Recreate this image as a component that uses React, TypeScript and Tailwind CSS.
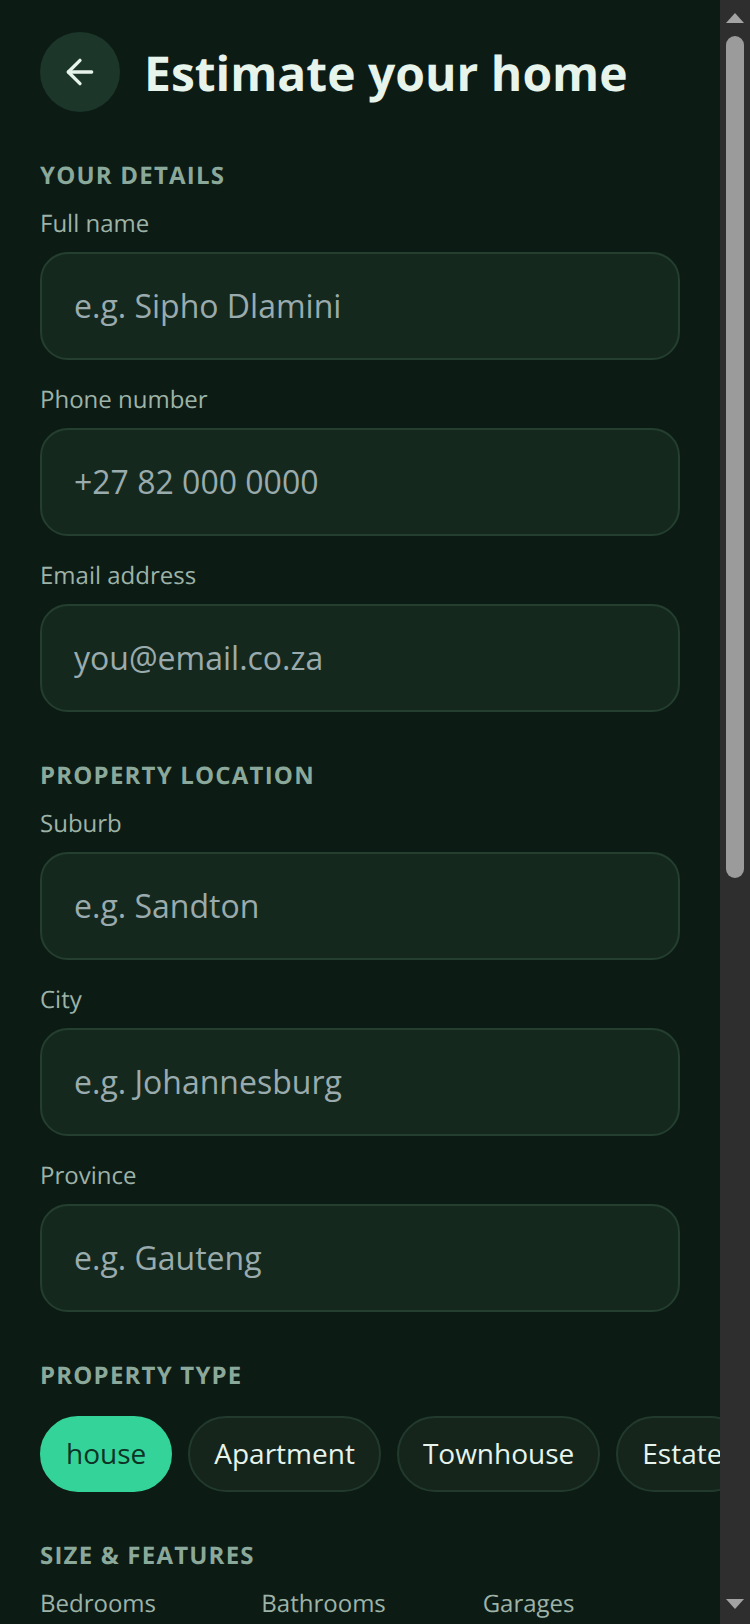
import React from 'react'
import { ArrowLeft } from 'lucide-react'

const Section = ({ title, children }: { title: string; children: React.ReactNode }) => (
  <section className="mb-[47px]">
    <h2 className="mb-[15px] text-[24px] leading-[33px] font-bold tracking-[1.2px] text-[#8aa99a]">{title}</h2>
    {children}
  </section>
)

const Field = ({ label, placeholder }: { label: string; placeholder: string }) => (
  <div className="mb-[23px] last:mb-0">
    <label className="mb-[12px] block text-[24px] leading-[33px] text-[#9db3a8]">{label}</label>
    <input
      placeholder={placeholder}
      className="h-[108px] w-full rounded-[28px] border-2 border-[#243e30] bg-[#15281e] px-8 pb-[1px] text-[32px] text-[#e8f5ee] outline-none placeholder:text-[#9aabad]"
    />
  </div>
)

const chips = ['house', 'Apartment', 'Townhouse', 'Estate', 'Farm']

const App: React.FC = () => {
  return (
    <div className="flex h-[1624px] w-[750px] overflow-hidden bg-[#0d1b15] font-['Open_Sans',sans-serif] antialiased [text-rendering:geometricPrecision]">
      <main className="w-[720px] shrink-0 overflow-hidden pt-8">
        <header className="mb-[47px] flex items-center gap-6 px-10">
          <button className="flex h-20 w-20 items-center justify-center rounded-full bg-[#1c3629] text-[#e6f4ec]">
            <ArrowLeft size={40} />
          </button>
          <h1 className="pt-[3px] text-[48px] leading-[64px] font-bold text-[#e6f4ec]">Estimate your home</h1>
        </header>

        <div className="px-10">
          <Section title="YOUR DETAILS">
            <Field label="Full name" placeholder="e.g. Sipho Dlamini" />
            <Field label="Phone number" placeholder="+27 82 000 0000" />
            <Field label="Email address" placeholder="you@email.co.za" />
          </Section>

          <Section title="PROPERTY LOCATION">
            <Field label="Suburb" placeholder="e.g. Sandton" />
            <Field label="City" placeholder="e.g. Johannesburg" />
            <Field label="Province" placeholder="e.g. Gauteng" />
          </Section>

          <h2 className="mb-[24px] text-[24px] leading-[33px] font-bold tracking-[1.2px] text-[#8aa99a]">PROPERTY TYPE</h2>
        </div>

        <div className="mb-[47px] flex gap-4 overflow-hidden pl-10">
          {chips.map((c, i) => (
            <button
              key={c}
              className={
                i === 0
                  ? 'h-[76px] shrink-0 rounded-full border-2 border-[#34d399] bg-[#34d399] px-[24px] pb-[2px] text-[28px] text-[#0e3326]'
                  : 'h-[76px] shrink-0 rounded-full border-2 border-[#223a2d] bg-[#15251c] px-[24px] pb-[2px] text-[28px] text-[#e6f4ec]'
              }
            >
              {c}
            </button>
          ))}
        </div>

        <div className="px-10">
          <h2 className="mb-[15px] text-[24px] leading-[33px] font-bold tracking-[1.2px] text-[#8aa99a]">SIZE &amp; FEATURES</h2>
          <div className="grid grid-cols-3 gap-6">
            <label className="text-[24px] leading-[33px] text-[#9db3a8]">Bedrooms</label>
            <label className="text-[24px] leading-[33px] text-[#9db3a8]">Bathrooms</label>
            <label className="text-[24px] leading-[33px] text-[#9db3a8]">Garages</label>
          </div>
        </div>
      </main>

      <aside className="flex w-[30px] shrink-0 flex-col items-center justify-between bg-[#2e2e2e] pt-[13px] pb-[15px]">
        <div className="flex flex-col items-center">
          <svg width="18" height="10" viewBox="0 0 18 10"><path d="M9 0 18 10H0Z" fill="#a3a3a3" /></svg>
          <div className="mt-[13px] h-[842px] w-[18px] rounded-full bg-[#9b9b9b]" />
        </div>
        <svg width="18" height="10" viewBox="0 0 18 10"><path d="M0 0H18L9 10Z" fill="#a3a3a3" /></svg>
      </aside>
    </div>
  )
}

export default App
